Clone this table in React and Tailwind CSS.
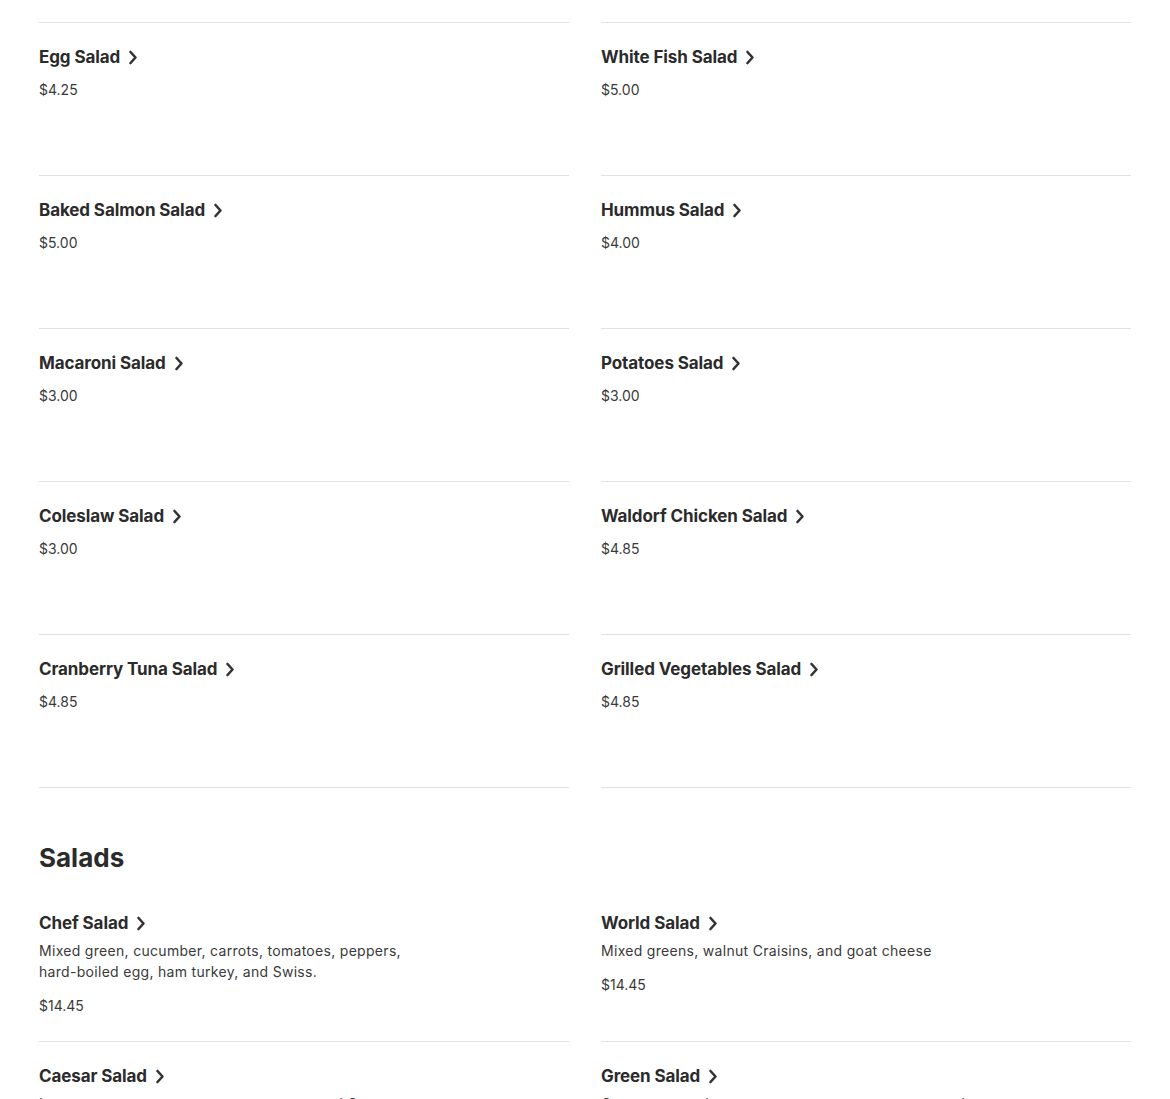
import React from 'react';

const sideItems = [
    { name: 'Egg Salad', price: '$4.25' },
    { name: 'White Fish Salad', price: '$5.00' },
    { name: 'Baked Salmon Salad', price: '$5.00' },
    { name: 'Hummus Salad', price: '$4.00' },
    { name: 'Macaroni Salad', price: '$3.00' },
    { name: 'Potatoes Salad', price: '$3.00' },
    { name: 'Coleslaw Salad', price: '$3.00' },
    { name: 'Waldorf Chicken Salad', price: '$4.85' },
    { name: 'Cranberry Tuna Salad', price: '$4.85' },
    { name: 'Grilled Vegetables Salad', price: '$4.85' },
];

const salads = [
    {
        name: 'Chef Salad',
        desc: 'Mixed green, cucumber, carrots, tomatoes, peppers, hard-boiled egg, ham turkey, and Swiss.',
        price: '$14.45',
    },
    { name: 'World Salad', desc: 'Mixed greens, walnut Craisins, and goat cheese', price: '$14.45' },
    { name: 'Caesar Salad', desc: 'Lettuce, tomatoes, croutons, parmesan, and Caesar', price: '$12.45' },
    { name: 'Green Salad', desc: 'Greens, cucumbers, tomatoes, carrots, peppers, and radishes', price: '$11.45' },
];

function Chevron() {
    return (
        <svg width="10" height="15" viewBox="0 0 10 15" fill="none" className="ml-2 shrink-0">
            <path d="M2.5 2 L7.5 7.5 L2.5 13" stroke="#333333" strokeWidth="2.6" strokeLinecap="round" strokeLinejoin="round" />
        </svg>
    );
}

function MenuItem({ item, tall }) {
    return (
        <div className={`border-b border-[#e2e2e2] pt-[22px] pb-[25px] ${tall ? 'min-h-[153px]' : ''}`}>
            <div className="flex items-center h-6">
                <h3 className="text-[17px] font-bold text-[#2b2b2b] leading-6 tracking-[-0.1px]">{item.name}</h3>
                <Chevron />
            </div>
            {item.desc && (
                <p className="mt-[5px] text-[14px] leading-[21px] tracking-[0.3px] text-[#3a3a3a] max-w-[400px]">{item.desc}</p>
            )}
            <p className={`${item.desc ? 'mt-3.5' : 'mt-[11px]'} text-[14px] leading-5 text-[#3a3a3a]`}>{item.price}</p>
        </div>
    );
}

export default function App() {
    return (
        <div className="bg-white min-h-screen font-['Inter','Liberation_Sans',sans-serif]">
            <div className="w-[1092px] mx-auto">
                {/* tail of the previous row, scrolled out of view */}
                <div className="grid grid-cols-2 gap-x-8">
                    <div className="h-[23px] border-b border-[#e2e2e2]" />
                    <div className="h-[23px] border-b border-[#e2e2e2]" />
                </div>

                <div className="grid grid-cols-2 gap-x-8">
                    {sideItems.map((item) => (
                        <MenuItem key={item.name} item={item} tall />
                    ))}
                </div>

                <h2 className="mt-[54px] mb-[15px] text-[26px] leading-8 font-bold text-[#2b2b2b]">Salads</h2>

                <div className="grid grid-cols-2 gap-x-8">
                    {salads.map((item) => (
                        <MenuItem key={item.name} item={item} />
                    ))}
                </div>
            </div>
        </div>
    );
}
